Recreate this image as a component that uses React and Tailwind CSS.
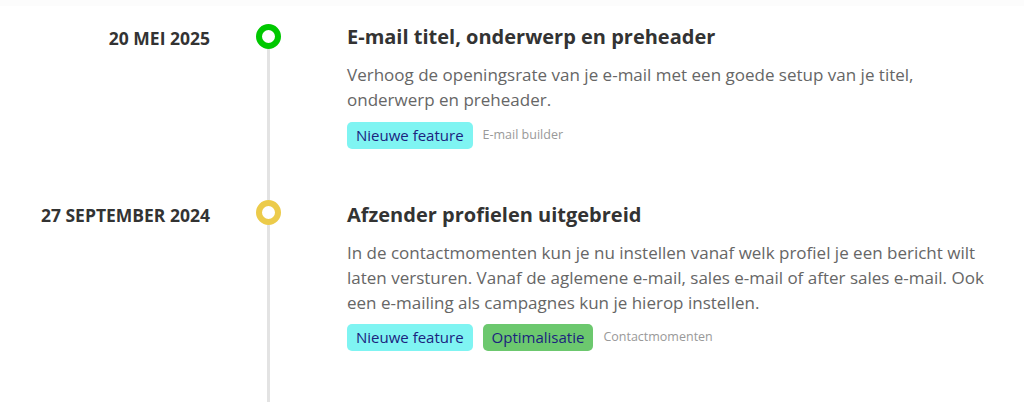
import React from "react";

const font = { fontFamily: '"Open Sans", "Noto Sans", sans-serif' };

function Badge({ children, color }) {
  return (
    <span className={`inline-block rounded-[5px] px-[9px] text-[15px] leading-[27px] text-[#1b237e] ${color}`}>
      {children}
    </span>
  );
}

function Row({ date, dateMt, circleMt, titleMt, circle, first, title, body, badges, tag, pb, badgeMt }) {
  return (
    <div className="flex">
      <div className="w-[210px] shrink-0 text-right">
        <div className={`${dateMt} text-[17.5px] font-bold leading-[24px] text-[#333333]`}>{date}</div>
      </div>
      <div className="w-[116px] shrink-0 flex flex-col items-center">
        <div className={`${circleMt} w-[3px] ${first ? "bg-transparent" : "bg-[#e3e3e3]"}`} />
        <div className={`h-[25px] w-[25px] shrink-0 rounded-full border-[6px] bg-white ${circle}`} />
        <div className="w-[3px] flex-1 bg-[#e3e3e3]" />
      </div>
      <div className={`flex-1 pl-[21px] ${pb}`}>
        <div className={`${titleMt} text-[20px] font-bold leading-[30px] text-[#333333]`}>{title}</div>
        <div className="mt-[10px] pr-[20px] text-[17px] leading-[25px] text-[#666666]">{body}</div>
        <div className={`${badgeMt} flex items-center gap-[10px]`}>
          {badges}
          <span className="text-[12.5px] text-[#999999]">{tag}</span>
        </div>
      </div>
    </div>
  );
}

export default function App() {
  return (
    <div className="w-[1024px] h-[410px] overflow-hidden bg-white" style={font}>
      <div className="h-[6px] bg-[#fcfcfc]" />
      <Row
        first
        date="20 MEI 2025"
        dateMt="mt-[20px]"
        circleMt="h-[18px]"
        titleMt="mt-[16px]"
        circle="border-[#00c800]"
        title="E-mail titel, onderwerp en preheader"
        body="Verhoog de openingsrate van je e-mail met een goede setup van je titel, onderwerp en preheader."
        badgeMt="mt-[10px]"
        badges={<Badge color="bg-[#7ff4f2]">Nieuwe feature</Badge>}
        tag="E-mail builder"
        pb="pb-[35px]"
      />
      <Row
        date="27 SEPTEMBER 2024"
        dateMt="mt-[19px]"
        circleMt="h-[16px]"
        titleMt="mt-[16px]"
        circle="border-[#eccb4a]"
        title="Afzender profielen uitgebreid"
        body="In de contactmomenten kun je nu instellen vanaf welk profiel je een bericht wilt laten versturen. Vanaf de aglemene e-mail, sales e-mail of after sales e-mail. Ook een e-mailing als campagnes kun je hierop instellen."
        badgeMt="mt-[9px]"
        badges={
          <>
            <Badge color="bg-[#7ff4f2]">Nieuwe feature</Badge>
            <Badge color="bg-[#6cc86e]">Optimalisatie</Badge>
          </>
        }
        tag="Contactmomenten"
        pb="pb-[51px]"
      />
    </div>
  );
}
